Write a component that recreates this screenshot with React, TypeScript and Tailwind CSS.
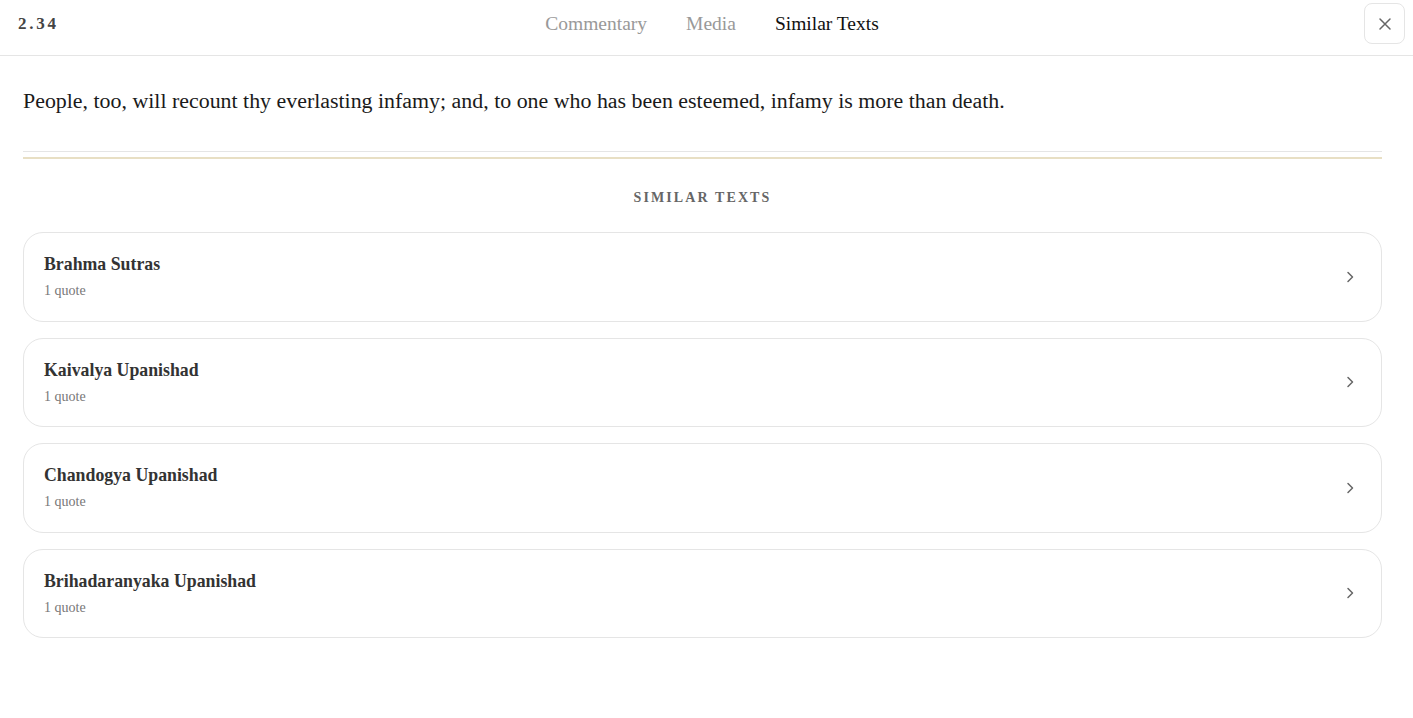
import React from "react";

const items = [
  "Brahma Sutras",
  "Kaivalya Upanishad",
  "Chandogya Upanishad",
  "Brihadaranyaka Upanishad",
];

export default function App() {
  return (
    <div className="w-[1413px] h-[718px] bg-white text-[#1a1a1a]" style={{ fontFamily: '"Liberation Serif", serif' }}>
      <header className="h-[56px] border-b border-[#e5e5e5] flex items-start pt-[3px] px-[18px]">
        <div className="w-[200px] h-[42px] flex items-center text-[17px] font-bold tracking-[0.16em] text-[#444]">2.34</div>
        <nav className="flex-1 h-[42px] flex justify-center items-center gap-[39px] text-[19.5px] pl-[11px]">
          <span className="text-[#999]">Commentary</span>
          <span className="text-[#999]">Media</span>
          <span className="text-[#111]">Similar Texts</span>
        </nav>
        <div className="w-[200px] flex justify-end">
          <button className="w-[41px] h-[41px] -mr-[10px] rounded-[8px] border border-[#e5e5e5] flex items-center justify-center text-[#666]">
            <svg width="16" height="16" viewBox="0 0 16 16" fill="none" stroke="currentColor" strokeWidth="1.5" strokeLinecap="round">
              <path d="M3 3l10 10M13 3L3 13" />
            </svg>
          </button>
        </div>
      </header>
      <main className="px-[23px] pr-[31px]">
        <p className="pt-[31px] text-[21.9px] leading-[28px] text-[#1a1a1a]">
          People, too, will recount thy everlasting infamy; and, to one who has been esteemed, infamy is more than death.
        </p>
        <div className="mt-[36px] border-t border-[#e5e5e5]" />
        <div className="mt-[5px] h-[2px] bg-[#e8dfc4]" />
        <h2 className="mt-[28px] text-center text-[14px] font-bold tracking-[0.15em] text-[#666]">SIMILAR TEXTS</h2>
        <div className="mt-[24px] flex flex-col gap-[16px]">
          {items.map((t) => (
            <div key={t} className="h-[89.5px] rounded-[20px] border border-[#e5e5e5] flex items-center justify-between pl-[20px] pr-[23px]">
              <div className="flex flex-col">
                <span className="text-[17.8px] font-bold text-[#333] leading-[20px]">{t}</span>
                <span className="mt-[8px] text-[14px] text-[#777] leading-[17px]">1 quote</span>
              </div>
              <svg width="16" height="16" viewBox="0 0 16 16" fill="none" stroke="#666" strokeWidth="1.5" strokeLinecap="round" strokeLinejoin="round">
                <path d="M6 3.5l4.5 4.5L6 12.5" />
              </svg>
            </div>
          ))}
        </div>
      </main>
    </div>
  );
}
